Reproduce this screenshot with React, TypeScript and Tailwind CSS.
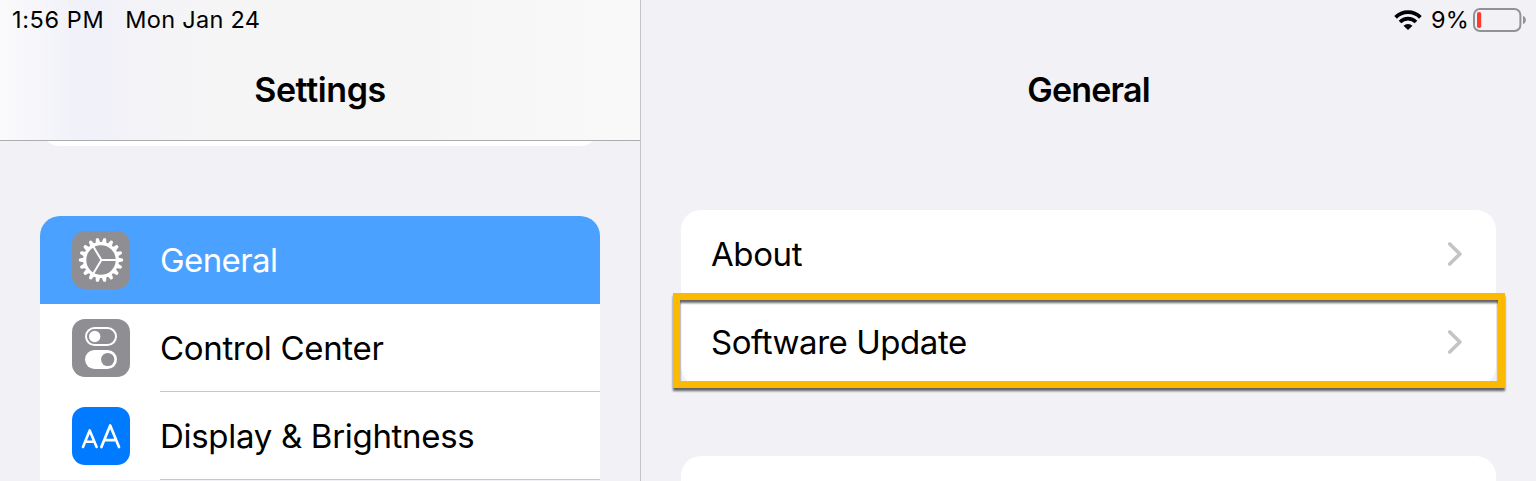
import type { ReactNode } from "react";

const TEETH = Array.from({ length: 18 }, (_, i) => i * 20);

function GearIcon() {
  return (
    <svg viewBox="0 0 58 58" className="size-[58px]" fill="none" stroke="#fff">
      <circle cx="29" cy="29" r="16.3" strokeWidth="3.2" />
      {TEETH.map((a) => (
        <path key={a} d="M45.5 26.4L50.4 27.5Q51.2 27.8 51.2 29T50.4 30.5L45.5 31.6Z" fill="#fff" stroke="none" transform={`rotate(${a} 29 29)`} />
      ))}
      <path d="M29.4 29H45M29.4 29L21 15.1M29.4 29L21 42.9" strokeWidth="2" />
    </svg>
  );
}

function ControlIcon() {
  return (
    <svg viewBox="0 0 58 58" className="size-[58px]">
      <rect x="14" y="9" width="30" height="17" rx="8.5" fill="none" stroke="#fff" strokeWidth="2" />
      <circle cx="22.7" cy="17.5" r="5.7" fill="#fff" />
      <rect x="13" y="31" width="32" height="19" rx="9.5" fill="#fff" />
      <circle cx="35.7" cy="40.5" r="6.6" fill="#8e8e93" />
    </svg>
  );
}

function DisplayIcon() {
  return (
    <svg viewBox="0 0 58 58" className="size-[58px]" fill="none" stroke="#fff" strokeLinecap="round" strokeLinejoin="round">
      <path d="M11 40L17.7 23.4L24.6 40M13.2 34.8H22.4" strokeWidth="2.6" />
      <path d="M29.4 40L38.2 18.4L47 40M32.2 33.2H44.2" strokeWidth="2.7" />
    </svg>
  );
}

function Chevron() {
  return (
    <svg viewBox="0 0 16 26" className="h-[26px] w-4" fill="none" stroke="#c4c4c6" strokeWidth="3.6" strokeLinecap="round" strokeLinejoin="round">
      <path d="M2.7 3L12.9 13L2.7 23" />
    </svg>
  );
}

function WifiIcon() {
  return (
    <svg viewBox="0 0 28 20" className="h-5 w-7" fill="none" stroke="#000">
      <path d="M1.6 7.3A17.5 17.5 0 0 1 26.4 7.3" strokeWidth="3.8" />
      <path d="M6 11.9A11.3 11.3 0 0 1 22 11.9" strokeWidth="3.6" />
      <path d="M9.5 15.8A6.5 6.5 0 0 1 18.5 15.8L14 20Z" fill="#000" stroke="none" />
    </svg>
  );
}

function BatteryIcon() {
  return (
    <svg viewBox="0 0 54 24" className="h-6 w-[54px]">
      <rect x="1" y="1" width="46.4" height="22" rx="6" fill="none" stroke="#929295" strokeWidth="2" />
      <rect x="4" y="4" width="4.2" height="16" rx="1.8" fill="#ff3b30" />
      <path d="M50 8C53.8 9 53.8 15 50 16Z" fill="#929295" />
    </svg>
  );
}

function SidebarRow({ icon, tile, label, spacing, selected }: { icon: ReactNode; tile: string; label: string; spacing: string; selected?: boolean }) {
  return (
    <div className={`flex h-[88px] pl-8 ${selected ? "bg-[#4ba1ff] text-white" : "bg-white"}`}>
      <div className={`mt-[15px] size-[58px] shrink-0 rounded-[13px] ${tile}`}>{icon}</div>
      <div className={`ml-[30px] flex flex-1 items-center border-b pt-[3px] text-[33px] whitespace-nowrap ${spacing} ${selected ? "border-transparent" : "border-[#c6c6c8]"}`}>{label}</div>
    </div>
  );
}

function DetailRow({ label, spacing }: { label: string; spacing: string }) {
  return (
    <div className="flex h-[88px] items-center justify-between pr-[33px] pl-[30px]">
      <span className={`pt-[2px] text-[33px] whitespace-nowrap ${spacing}`}>{label}</span>
      <Chevron />
    </div>
  );
}

export default function App() {
  return (
    <div className="flex h-[481px] w-[1536px] overflow-hidden bg-[#f2f1f6] font-['Inter','Liberation_Sans',sans-serif] text-black">
      <aside className="flex w-[641px] shrink-0 flex-col border-r border-[#c3c2c7]">
        <header className="h-[141px] shrink-0 border-b border-[#adadb0] bg-[linear-gradient(to_right,#fafafc_0,#f7f7fb_30px,#f0f1f9_80px,#f1f1f8_110px,#f4f4f7_160px,#f5f5f6_220px,#f5f5f5_420px,#f8f8f8_560px,#f9f9f9_100%)]">
          <div className="flex h-10 items-center gap-[21px] pl-[12px] text-[23.5px] whitespace-nowrap">
            <span className="tracking-[0.6px]">1:56 PM</span>
            <span className="tracking-[0.3px]">Mon Jan 24</span>
          </div>
          <h1 className="mt-[30px] text-center text-[34px] leading-10 font-semibold tracking-[-0.4px]">Settings</h1>
        </header>
        <div className="mx-10 h-[5px] shrink-0 overflow-hidden">
          <div className="-mt-10 h-[45px] rounded-b-[20px] bg-white" />
        </div>
        <nav className="mx-10 mt-[70px] shrink-0 overflow-hidden rounded-t-[20px]">
          <SidebarRow icon={<GearIcon />} tile="bg-[#8e8e93]" label="General" spacing="tracking-[-0.6px]" selected />
          <SidebarRow icon={<ControlIcon />} tile="bg-[#8e8e93]" label="Control Center" spacing="tracking-[-0.33px]" />
          <SidebarRow icon={<DisplayIcon />} tile="bg-[#007aff]" label="Display & Brightness" spacing="tracking-[-0.3px]" />
        </nav>
      </aside>
      <main className="flex flex-1 flex-col">
        <div className="flex h-10 shrink-0 items-center justify-end pr-[9px]">
          <WifiIcon />
          <span className="ml-[9px] w-[42px] text-[23.5px] tracking-[0.2px] whitespace-nowrap">9%</span>
          <BatteryIcon />
        </div>
        <h2 className="mt-[30px] text-center text-[34px] leading-10 font-semibold tracking-[-0.8px]">General</h2>
        <section className="relative mx-10 mt-[100px] h-44 shrink-0 rounded-[20px] bg-white">
          <DetailRow label="About" spacing="tracking-[-0.4px]" />
          <DetailRow label="Software Update" spacing="tracking-[-0.45px]" />
          <div className="absolute top-[83px] -left-2 h-[95px] w-[832px] border-7 border-[#fbb900] drop-shadow-[0_3px_1px_rgba(0,0,0,0.6)]" />
        </section>
        <section className="mx-10 mt-[70px] h-20 shrink-0 rounded-t-[20px] bg-white" />
      </main>
    </div>
  );
}
